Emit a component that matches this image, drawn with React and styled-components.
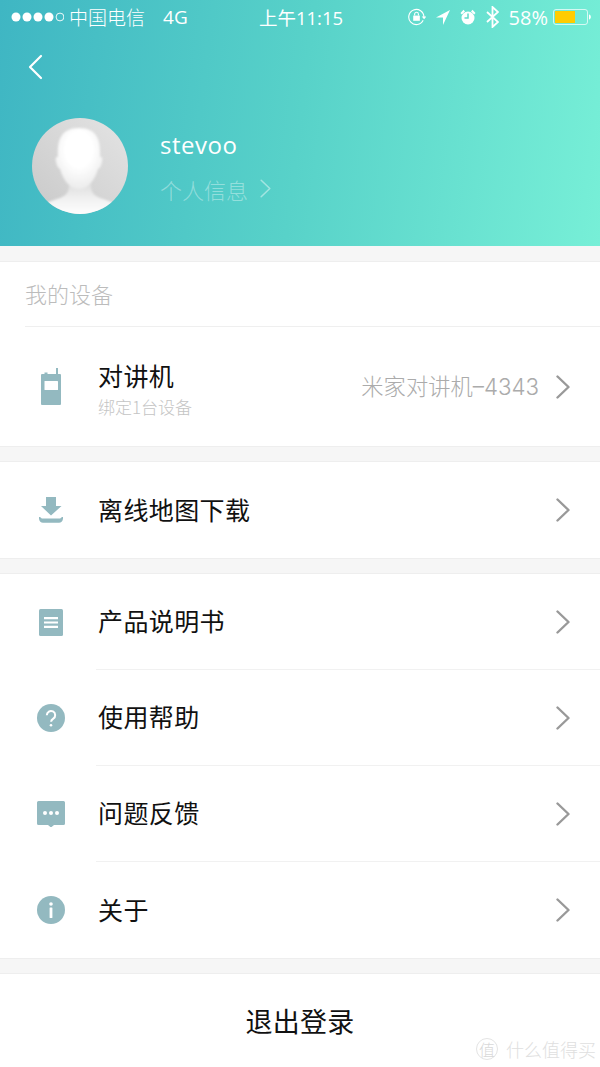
import React from "react";
import styled, { createGlobalStyle } from "styled-components";

const Global = createGlobalStyle`
  html, body { margin: 0; padding: 0; background: #f5f5f5; }
  body { font-family: "Liberation Sans", "Noto Sans CJK SC", sans-serif; }
  * { box-sizing: border-box; }
`;
const Page = styled.div`
  position: relative; width: 600px; height: 1067px; overflow: hidden; background: #f6f6f6;
  font-family: "Inter", "Noto Sans CJK SC", sans-serif;
`;
const Hero = styled.header`
  height: 246px; display: flex; flex-direction: column; color: #fff;
  background: linear-gradient(97deg, #3fb6c3 0%, #58d2c9 50%, #77efd7 100%);
`;
const StatusBar = styled.div`
  height: 34px; display: grid; grid-template-columns: 1fr auto 1fr; align-items: center;
  padding: 0 9px 0 11px; font-size: 19px; color: #fff;
  font-family: "Open Sans", "Noto Sans CJK SC", sans-serif;
`;
const StatusLeft = styled.div`display: flex; align-items: center;`;
const Carrier = styled.span`margin-left: 5px; font-weight: 300;`;
const Net = styled.span`margin-left: 18px; font-size: 19px;`;
const Clock = styled.div`font-size: 18.5px; white-space: nowrap;`;
const StatusRight = styled.div`display: flex; align-items: center; justify-content: flex-end; gap: 10px;`;
const Percent = styled.span`font-size: 20px; margin-right: -5px;`;
const Back = styled.button`
  all: unset; display: block; width: 20px; height: 26px; margin: 20px 0 0 27px;
`;
const Profile = styled.div`display: flex; align-items: center; margin: 38px 0 0 32px; gap: 32px;`;
const Names = styled.div`display: flex; flex-direction: column; margin-top: 1px;`;
const UserName = styled.div`font-size: 24px; line-height: 30px; letter-spacing: 0.5px; font-family: "Open Sans", sans-serif; font-weight: 400;`;
const InfoLink = styled.div`
  display: flex; align-items: center; gap: 12px; margin-top: 14px; font-size: 22px; line-height: 30px;
  color: rgba(255,255,255,0.38); font-family: "Noto Sans CJK SC", sans-serif; font-weight: 300;
`;
const Section = styled.section`
  background: #fff; margin-top: 16px; box-shadow: 0 0 0 1px #eeeeee;
`;
const SectionTitle = styled.div`
  height: 65px; margin-left: 25px; padding-bottom: 2px; display: flex; align-items: center; font-size: 22px; color: #bcbcbc;
  border-bottom: 1px solid #efefef; font-family: "Noto Sans CJK SC", sans-serif; font-weight: 300;
`;
const Row = styled.div`
  height: ${p => p.$h || 96}px; display: flex; align-items: center; position: relative;
`;
const IconSlot = styled.div`
  width: 96px; height: 100%; flex: none; display: flex; align-items: center; justify-content: center; padding-left: 6px;
`;
const RowBody = styled.div`
  flex: 1; height: 100%; display: flex; align-items: center; padding: 0 30px 0 2px;
  border-bottom: ${p => p.$line ? "1px solid #f1f1f1" : "none"};
`;
const Texts = styled.div`
  flex: 1; display: flex; flex-direction: column; font-family: "Noto Sans CJK SC", sans-serif;
  margin-top: -3px;
`;
const Label = styled.div`font-size: 25px; line-height: 32px; color: #111; font-weight: 400; letter-spacing: 0.4px;`;
const Sub = styled.div`font-size: 17px; line-height: 20px; color: #c4c4c4; margin: 6px 0 -5px; font-weight: 300;`;
const Value = styled.div`
  font-size: 22.3px; color: #ababab; margin: -3px 17px 0 0; font-family: "Inter", "Noto Sans CJK SC", sans-serif; font-weight: 300;
`;
const Logout = styled.button`
  all: unset; display: flex; align-items: center; justify-content: center; width: 100%; height: 96px; background: #fff;
  margin-top: 16px; box-shadow: 0 0 0 1px #eeeeee; font-size: 27px; color: #111; padding-bottom: 4px;
  font-family: "Noto Sans CJK SC", sans-serif; box-sizing: border-box; letter-spacing: 0.2px;
`;
const Watermark = styled.div`
  position: absolute; right: 4px; bottom: 5px; display: flex; align-items: center; gap: 8px;
  color: #e0e0e0; font-size: 18px; font-family: "Noto Sans CJK SC", sans-serif; font-weight: 300;
`;
const WatermarkBadge = styled.span`
  display: flex; width: 22px; height: 22px; border: 1px solid #e4e4e4; border-radius: 50%; align-items: center; justify-content: center;
  font-size: 16px; color: #d8d8d8;
`;

const Chevron = ({ color = "#999", w = 14, h = 24, sw = 2.4 }) => (
  <svg width={w} height={h} viewBox="0 0 14 24" fill="none"><path d="M1.500 1.500 12.500 12 1.500 22.500" stroke={color} strokeWidth={sw} strokeLinecap="round" strokeLinejoin="round" /></svg>
);
const Accent = "#93b9c0";
const Radio = () => (
  <svg width="20" height="37" viewBox="0 0 20 37"><path d="M15 0h2v8h-2z" fill={Accent} /><path d="M1 6h2.500V4.500h3V6H19a1 1 0 0 1 1 1v29a1 1 0 0 1-1 1H1a1 1 0 0 1-1-1V7a1 1 0 0 1 1-1Z" fill={Accent} /><rect x="3.500" y="13" width="13.500" height="9" rx=".5" fill="#fff" /></svg>
);
const Download = () => (
  <svg width="24" height="26" viewBox="0 0 24 26"><path d="M7 0h10v9h5.500L12 18.500 2 9h5Z" fill={Accent} /><path d="M0 20c1.500 0 2 .6 2.800 1.600h18.400C22 20.600 22.500 20 24 20c.4 3.400-1.500 5.800-4 5.800H4C1.500 25.800-.4 23.400 0 20Z" fill={Accent} /></svg>
);
const Manual = () => (
  <svg width="24" height="27" viewBox="0 0 24 27"><rect width="24" height="27" rx="1.500" fill={Accent} /><path d="M5 8h14v2.200H5zM5 12.400h14v2.200H5zM5 16.800h14V19H5z" fill="#fff" /></svg>
);
const Help = () => (
  <svg width="28" height="28" viewBox="0 0 28 28"><circle cx="14" cy="14" r="14" fill={Accent} /><path d="M9.800 11.200a4.200 4.200 0 1 1 6.500 3.500c-1.400.9-2.200 1.500-2.200 3.100" fill="none" stroke="#fff" strokeWidth="2" /><circle cx="14" cy="21.300" r="1.300" fill="#fff" /></svg>
);
const Feedback = () => (
  <svg width="28" height="26" viewBox="0 0 28 26"><path d="M1.500 0h25A1.500 1.500 0 0 1 28 1.500v21a1.500 1.500 0 0 1-1.500 1.500H17l-3 2.500L11 24H1.500A1.500 1.500 0 0 1 0 22.500v-21A1.500 1.500 0 0 1 1.500 0Z" fill={Accent} /><circle cx="8" cy="12" r="2" fill="#fff" /><circle cx="14" cy="12" r="2" fill="#fff" /><circle cx="20" cy="12" r="2" fill="#fff" /></svg>
);
const Info = () => (
  <svg width="28" height="28" viewBox="0 0 28 28"><circle cx="14" cy="14" r="14" fill={Accent} /><circle cx="14" cy="8" r="1.800" fill="#fff" /><rect x="12.600" y="11.500" width="2.800" height="10.500" rx=".6" fill="#fff" /></svg>
);
const Avatar = () => (
  <svg width="96" height="96" viewBox="0 0 96 96">
    <defs>
      <linearGradient id="ab" x1="0" y1="1" x2="1" y2="0"><stop offset="0" stopColor="#c9c9c9" /><stop offset="1" stopColor="#e4e4e4" /></linearGradient>
      <radialGradient id="af" cx=".5" cy=".35" r=".65"><stop offset=".45" stopColor="#ffffff" /><stop offset="1" stopColor="#ececec" /></radialGradient>
      <linearGradient id="as" x1="0" y1="0" x2="0" y2="1"><stop offset="0" stopColor="#dedede" /><stop offset=".5" stopColor="#f2f2f2" /><stop offset="1" stopColor="#ffffff" /></linearGradient>
      <clipPath id="ac"><circle cx="48" cy="48" r="48" /></clipPath>
      <filter id="ar"><feGaussianBlur stdDeviation=".8" /></filter>
    </defs>
    <circle cx="48" cy="48" r="48" fill="url(#ab)" />
    <g clipPath="url(#ac)">
      <g filter="url(#ar)">
        <path d="M10 98V88c5-4 12-6 18-8 7-3 9-6 9-14h22c0 8 2 11 9 14 6 2 13 4 18 8v10Z" fill="url(#as)" />
        <path d="M24 44c-1-4 0-6 2-5-1-17 3-29 21-29s22 12 21 29c2-1 3 1 2 5-1 4-2 6-4 7-3 11-10 20-19 20S31 62 28 51c-2-1-3-3-4-7Z" fill="url(#af)" />
      </g>
    </g>
  </svg>
);

const Rows = [
  { label: "产品说明书", icon: <Manual /> },
  { label: "使用帮助", icon: <Help /> },
  { label: "问题反馈", icon: <Feedback /> },
  { label: "关于", icon: <Info /> },
];

export default function App() {
  return (
    <Page>
      <Global />
      <Hero>
        <StatusBar>
          <StatusLeft>
            <svg width="53" height="10" viewBox="0 0 53 10" fill="#fff">
              <circle cx="5" cy="5" r="4.500" /><circle cx="16" cy="5" r="4.500" /><circle cx="27" cy="5" r="4.500" /><circle cx="38" cy="5" r="4.500" />
              <circle cx="49" cy="5" r="3.900" fill="none" stroke="#fff" strokeWidth=".9" />
            </svg>
            <Carrier>中国电信</Carrier>
            <Net>4G</Net>
          </StatusLeft>
          <Clock>上午11:15</Clock>
          <StatusRight>
            <svg width="18" height="18" viewBox="0 0 19 18" fill="none" stroke="#fff" strokeWidth="1.200"><path d="M16 12.500A8 8 0 1 1 16.800 9" /><path d="M14.500 8.500h5l-2.500 3Z" fill="#fff" stroke="none" /><rect x="5.500" y="7.500" width="7" height="5.500" fill="#fff" stroke="none" /><path d="M7 7.500V6a2 2 0 0 1 4 0v1.500" /></svg>
            <svg width="14" height="15" viewBox="0 0 14 15" fill="#fff"><path d="M14 0 0 7.500h7V15Z" /></svg>
            <svg width="16" height="16" viewBox="0 0 16 16"><circle cx="8" cy="9" r="6.500" fill="#fff" /><path d="M8 4.500V9H4.500" stroke="#5fd9c9" strokeWidth="1.500" fill="none" /><path d="M.5 4 3.500.8 5 2.500 1.800 5.500ZM15.500 4 12.500.8 11 2.500l3.200 3Z" fill="#fff" /></svg>
            <svg width="13" height="22" viewBox="0 0 13 22" fill="none" stroke="#fff" strokeWidth="1.800"><path d="M1 6l11 10-5.500 5V1L12 6 1 16" /></svg>
            <Percent>58%</Percent>
            <svg width="38" height="16" viewBox="0 0 38 16"><rect x=".5" y=".5" width="34" height="15" rx="2.500" fill="none" stroke="rgba(255,255,255,.7)" /><rect x="2" y="2" width="20" height="12" fill="#ffcc00" /><path d="M36 5.500c1.200.3 1.800 1.200 1.800 2.500s-.6 2.200-1.800 2.500Z" fill="#fff" /></svg>
          </StatusRight>
        </StatusBar>
        <Back aria-label="back">
          <svg width="16" height="26" viewBox="0 0 16 26" fill="none"><path d="M14 2 3 13l11 11" stroke="#fff" strokeWidth="2.200" strokeLinecap="round" strokeLinejoin="round" /></svg>
        </Back>
        <Profile>
          <Avatar />
          <Names>
            <UserName>stevoo</UserName>
            <InfoLink>个人信息 <Chevron color="rgba(255,255,255,.45)" w={11} h={19} sw={2} /></InfoLink>
          </Names>
        </Profile>
      </Hero>

      <Section>
        <SectionTitle>我的设备</SectionTitle>
        <Row $h={119}>
          <IconSlot><Radio /></IconSlot>
          <RowBody>
            <Texts>
              <Label>对讲机</Label>
              <Sub>绑定1台设备</Sub>
            </Texts>
            <Value>米家对讲机–4343</Value>
            <Chevron />
          </RowBody>
        </Row>
      </Section>

      <Section>
        <Row>
          <IconSlot><Download /></IconSlot>
          <RowBody><Texts><Label>离线地图下载</Label></Texts><Chevron /></RowBody>
        </Row>
      </Section>

      <Section>
        {Rows.map((r, i) => (
          <Row key={r.label}>
            <IconSlot>{r.icon}</IconSlot>
            <RowBody $line={i < Rows.length - 1}><Texts><Label>{r.label}</Label></Texts><Chevron /></RowBody>
          </Row>
        ))}
      </Section>

      <Logout>退出登录</Logout>
      <Watermark><WatermarkBadge>值</WatermarkBadge>什么值得买</Watermark>
    </Page>
  );
}
